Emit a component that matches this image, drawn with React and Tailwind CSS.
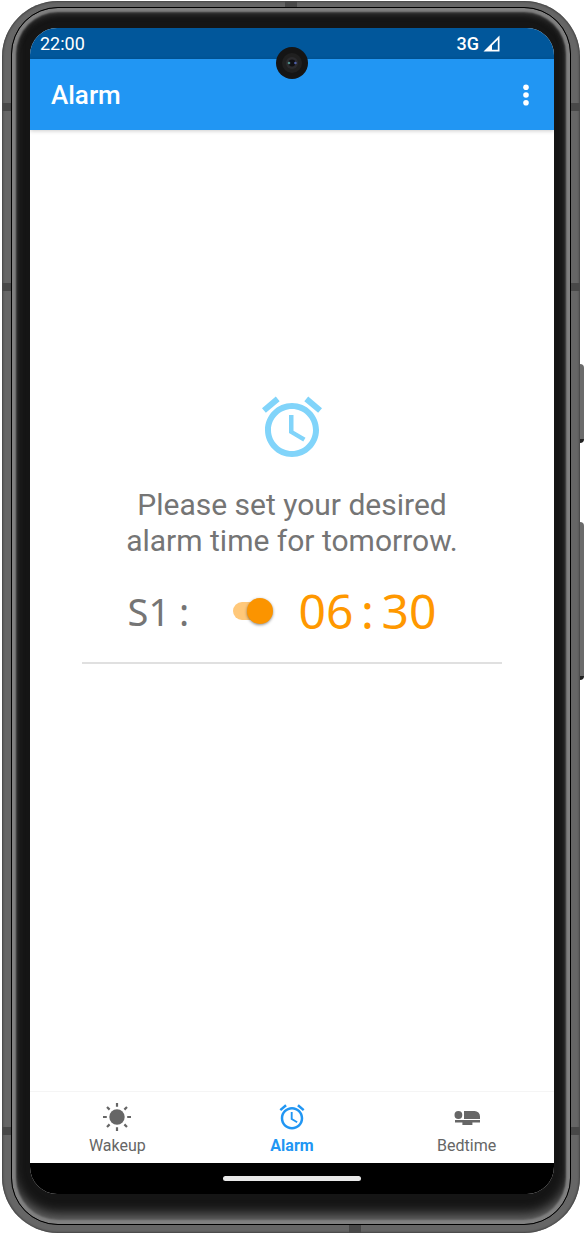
import React, { useState } from "react";

const ALARM_PATH =
  "M22 5.72l-4.6-3.86-1.29 1.53 4.6 3.86L22 5.72zM7.88 3.39L6.6 1.86 2 5.71l1.29 1.53 4.59-3.85zM12.5 8H11v6l4.75 2.85.75-1.23-4-2.37V8zM12 4c-4.97 0-9 4.03-9 9s4.02 9 9 9c4.97 0 9-4.03 9-9s-4.03-9-9-9zm0 16c-3.87 0-7-3.13-7-7s3.13-7 7-7 7 3.13 7 7-3.13 7-7 7z";

function AlarmIcon({ className }) {
  return (
    <svg viewBox="0 0 24 24" fill="currentColor" className={className} aria-hidden="true">
      <path d={ALARM_PATH} />
    </svg>
  );
}

function SunIcon({ className }) {
  return (
    <svg viewBox="0 0 30 30" className={className} aria-hidden="true">
      <circle cx="15" cy="15" r="7.7" fill="currentColor" />
      <path
        d="M15 1v3.8M15 25.2V29M1 15h3.8M25.2 15H29M5 5l2.6 2.6M22.4 22.4L25 25M25 5l-2.6 2.6M7.6 22.4L5 25"
        stroke="currentColor"
        strokeWidth="2.2"
      />
    </svg>
  );
}

function BedIcon({ className }) {
  return (
    <svg viewBox="0 0 30 30" fill="currentColor" className={className} aria-hidden="true">
      <circle cx="6.4" cy="13" r="3.9" />
      <path d="M12 9h10.6a5.4 5.4 0 0 1 5.4 5.4v2.6H12z" />
      <path d="M3 18h25v2.6h-7.6V23h-10v-2.4H3z" />
    </svg>
  );
}

function StatusBar() {
  return (
    <div className="flex h-[31px] items-center justify-between bg-[#01579b] pl-[10px] pr-[54px] text-[18px] text-white">
      <span>22:00</span>
      <span className="flex items-center gap-1">
        <span className="font-medium">3G</span>
        <svg viewBox="0 0 17 17" className="size-[17px]" aria-label="Signal">
          <path d="M16.5 .5v16H.5z" fill="white" />
          <path d="M14.8 4.8v9.9H9V10.4z" fill="#01579b" />
        </svg>
      </span>
    </div>
  );
}

function AppBar() {
  return (
    <header className="relative z-10 flex h-[71px] items-center justify-between bg-[#2196f3] pl-[21px] pr-4 text-white shadow-[0_1px_4px_rgba(0,0,0,0.2)]">
      <h1 className="pt-[2px] text-[26px] font-medium">Alarm</h1>
      <button type="button" aria-label="More options" className="flex h-10 w-6 items-center justify-center">
        <svg viewBox="0 0 6 22" fill="currentColor" className="h-[22px] w-[6px]">
          <circle cx="3" cy="3.2" r="2.8" />
          <circle cx="3" cy="11" r="2.8" />
          <circle cx="3" cy="18.8" r="2.8" />
        </svg>
      </button>
    </header>
  );
}

function AlarmRow() {
  const [on, setOn] = useState(true);
  return (
    <div className="flex h-[72px] items-center justify-center pr-5 font-['Noto_Sans',sans-serif]">
      <label htmlFor="alarm-s1" className="flex w-[105px] text-[38px] text-[#757575]">
        <span>S1</span>
        <span className="w-[28px] text-center">:</span>
      </label>
      <input
        id="alarm-s1"
        type="checkbox"
        role="switch"
        checked={on}
        onChange={() => setOn(!on)}
        className="relative h-[18px] w-[36px] appearance-none rounded-full bg-gray-300 before:absolute before:-top-1 before:left-0 before:size-[26px] before:rounded-full before:bg-gray-50 before:shadow-[0_1px_3px_rgba(0,0,0,0.45)] checked:bg-[#ffc87a] checked:before:left-[14px] checked:before:bg-[#fb9400]"
      />
      <button type="button" aria-label="Alarm time 06:30" className="ml-[30px] flex text-[48px] text-[#ff9800]">
        <span>06</span>
        <span className="w-7 text-center">:</span>
        <span>30</span>
      </button>
    </div>
  );
}

const TABS = [
  { label: "Wakeup", Icon: SunIcon, active: false },
  { label: "Alarm", Icon: AlarmIcon, active: true },
  { label: "Bedtime", Icon: BedIcon, active: false },
];

function BottomNav() {
  return (
    <nav className="grid h-[72px] grid-cols-3 border-t border-[#f5f5f5]">
      {TABS.map(({ label, Icon, active }) => (
        <a
          key={label}
          href={"#" + label.toLowerCase()}
          aria-current={active ? "page" : undefined}
          className={
            active
              ? "flex flex-col items-center gap-[2px] pt-[10px] text-[16px] leading-6 font-bold text-[#2196f3]"
              : "flex flex-col items-center gap-[2px] pt-[10px] text-[16px] leading-6 text-[#666666]"
          }
        >
          <Icon className="size-[30px]" />
          <span>{label}</span>
        </a>
      ))}
    </nav>
  );
}

export default function App() {
  return (
    <div className="flex min-h-screen bg-white pt-px pr-[5px] pb-px pl-[2px] font-[Roboto,sans-serif]">
      <div className="relative flex grow rounded-[56px] bg-[#666666] px-[9px] pt-[6px] pb-[8px] shadow-[inset_0_0_2px_1px_#444444]">
        <span className="absolute top-[363px] -right-1 h-[79px] w-1 rounded-r-sm border-b-4 border-[#222222] bg-[#6b6b6b]" />
        <span className="absolute top-[521px] -right-1 h-[158px] w-1 rounded-r-sm border-b-4 border-[#222222] bg-[#6b6b6b]" />
        <span className="absolute top-[102px] left-0 h-2 w-[9px] bg-[#484848]" />
        <span className="absolute top-[102px] right-0 h-2 w-[9px] bg-[#484848]" />
        <span className="absolute top-[282px] left-0 h-2 w-[9px] bg-[#484848]" />
        <span className="absolute top-[282px] right-0 h-2 w-[9px] bg-[#484848]" />
        <span className="absolute bottom-[98px] left-0 h-2 w-[9px] bg-[#484848]" />
        <span className="absolute right-0 bottom-[98px] h-2 w-[9px] bg-[#484848]" />
        <span className="absolute top-0 left-[283px] h-[6px] w-3 bg-[#484848]" />
        <span className="absolute bottom-0 left-[347px] h-2 w-3 bg-[#484848]" />
        <div className="relative flex grow rounded-[47px] border border-black bg-[#151515] pt-[20px] pr-4 pb-[30px] pl-[18px] shadow-[inset_0_0_2px_4px_#808080,inset_0_-10px_12px_0_#666666,inset_0_5px_7px_0_#484848]">
          <div className="relative flex grow flex-col overflow-hidden rounded-[27px] bg-white">
            <StatusBar />
            <AppBar />
            <span className="absolute top-[19px] left-1/2 z-20 flex size-8 -translate-x-1/2 items-center justify-center rounded-full bg-[#151515]">
              <svg viewBox="0 0 20 20" className="size-5">
                <circle cx="10" cy="10" r="10" fill="#202020" />
                <circle cx="10" cy="10" r="6" fill="#2b2b2e" />
                <circle cx="10" cy="10" r="3.4" fill="#101014" />
                <circle cx="7" cy="10" r="1.3" fill="#4f8a86" />
                <circle cx="13.4" cy="10" r="1.3" fill="#4f5fa8" />
              </svg>
            </span>
            <main className="flex grow flex-col justify-center px-[52px] pb-[166px]">
              <AlarmIcon className="size-[72px] self-center text-[#81d4fa]" />
              <p className="mt-6 text-center text-[30px] leading-9 text-[#757575]">
                Please set your desired
                <br />
                alarm time for tomorrow.
              </p>
              <div className="mt-4 border-b-2 border-[#e0e0e0] pb-[15px]">
                <AlarmRow />
              </div>
            </main>
            <BottomNav />
            <div className="flex h-[31px] items-center justify-center bg-black">
              <span className="h-[5px] w-[138px] rounded-full bg-[#e8e8e8]" />
            </div>
          </div>
        </div>
      </div>
    </div>
  );
}
